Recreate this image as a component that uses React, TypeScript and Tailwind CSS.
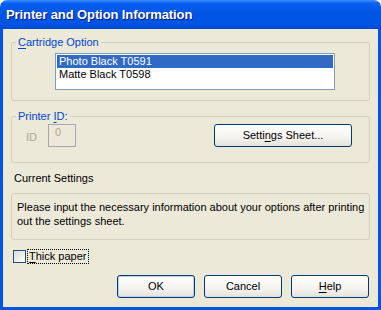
import React from 'react';

function Mn({ children }: { children: React.ReactNode }) {
  return <span className="underline underline-offset-[2px]">{children}</span>;
}

function XpButton({ children, className = '' }: { children: React.ReactNode; className?: string }) {
  return (
    <button
      className={`h-[23px] rounded-[3px] border border-[#003c74] bg-[linear-gradient(to_bottom,#ffffff_0%,#f4f3ee_60%,#e3e2da_100%)] text-[11px] text-black ${className}`}
    >
      {children}
    </button>
  );
}

export default function App() {
  return (
    <div className="w-[381px] h-[310px] flex flex-col font-['Liberation_Sans',Arial,sans-serif] text-[11px] text-black select-none">
      {/* title bar */}
      <div className="h-[29px] shrink-0 rounded-t-[7px] bg-[linear-gradient(to_bottom,#3d8ff9_0%,#0a5ff0_12%,#0055e5_45%,#0054e3_85%,#0048d6_100%)] flex items-center pl-[6px]">
        <span className="text-white font-bold text-[13px] [text-shadow:1px_1px_0_#0a1883] tracking-[-0.1px]">
          Printer and Option Information
        </span>
      </div>

      {/* body */}
      <div className="flex-1 flex flex-col border-x-[3px] border-b-[3px] border-[#0055e5] bg-[#ece9d8] pl-[8px] pr-[8px]">
        <fieldset className="mt-[7px] h-[65px] rounded-[3px] border border-[#d0d0bf] pl-[4px]">
          <legend className="px-[2px] text-[#0046d5] leading-[13px]">
            <Mn>C</Mn>artridge Option
          </legend>
          <div className="ml-[39px] mt-[4px] w-[280px] h-[37px] border border-[#7f9db9] bg-white p-px">
            <div className="h-[13px] bg-[#316ac5] text-white leading-[13px] pl-[2px]">Photo Black T0591</div>
            <div className="h-[13px] leading-[13px] pl-[2px]">Matte Black T0598</div>
          </div>
        </fieldset>

        <fieldset className="mt-[9px] h-[53px] rounded-[3px] border border-[#d0d0bf] pl-[4px]">
          <legend className="px-[2px] text-[#0046d5] leading-[13px]">
            Printer <Mn>I</Mn>D:
          </legend>
          <div className="flex items-start mt-[1px]">
            <span className="ml-[10px] mt-[5px] text-[#aca899]">ID</span>
            <div className="ml-[11px] w-[28px] h-[23px] border border-[#a3a7b6] text-[#aca899] pl-[6px] pt-[1px] leading-[13px]">0</div>
            <XpButton className="ml-auto mr-[17px] w-[138px]">
              Setti<Mn>n</Mn>gs Sheet...
            </XpButton>
          </div>
        </fieldset>

        <div className="mt-[9px] ml-[3px] leading-[13px]">Current Settings</div>

        <div className="mt-[8px] h-[47px] rounded-[3px] border border-[#d0d0bf] pl-[5px] pt-[6px] leading-[14px]">
          Please input the necessary information about your options after printing
          <br />
          out the settings sheet.
        </div>

        <label className="mt-[10px] flex items-center">
          <span className="ml-[2px] w-[13px] h-[13px] border border-[#1c5180] bg-[linear-gradient(135deg,#dcdcd7_0%,#f0f0ea_60%,#ffffff_100%)]" />
          <span className="ml-[2px] px-[1px] outline outline-1 outline-dotted outline-black leading-[13px]">
            <Mn>T</Mn>hick paper
          </span>
        </label>

        <div className="mt-[12px] flex justify-end gap-[9px] pr-[1px]">
          <XpButton className="w-[78px] shadow-[inset_0_0_0_1px_#bccff0]">OK</XpButton>
          <XpButton className="w-[78px]">Cancel</XpButton>
          <XpButton className="w-[78px]">
            <Mn>H</Mn>elp
          </XpButton>
        </div>
      </div>
    </div>
  );
}
